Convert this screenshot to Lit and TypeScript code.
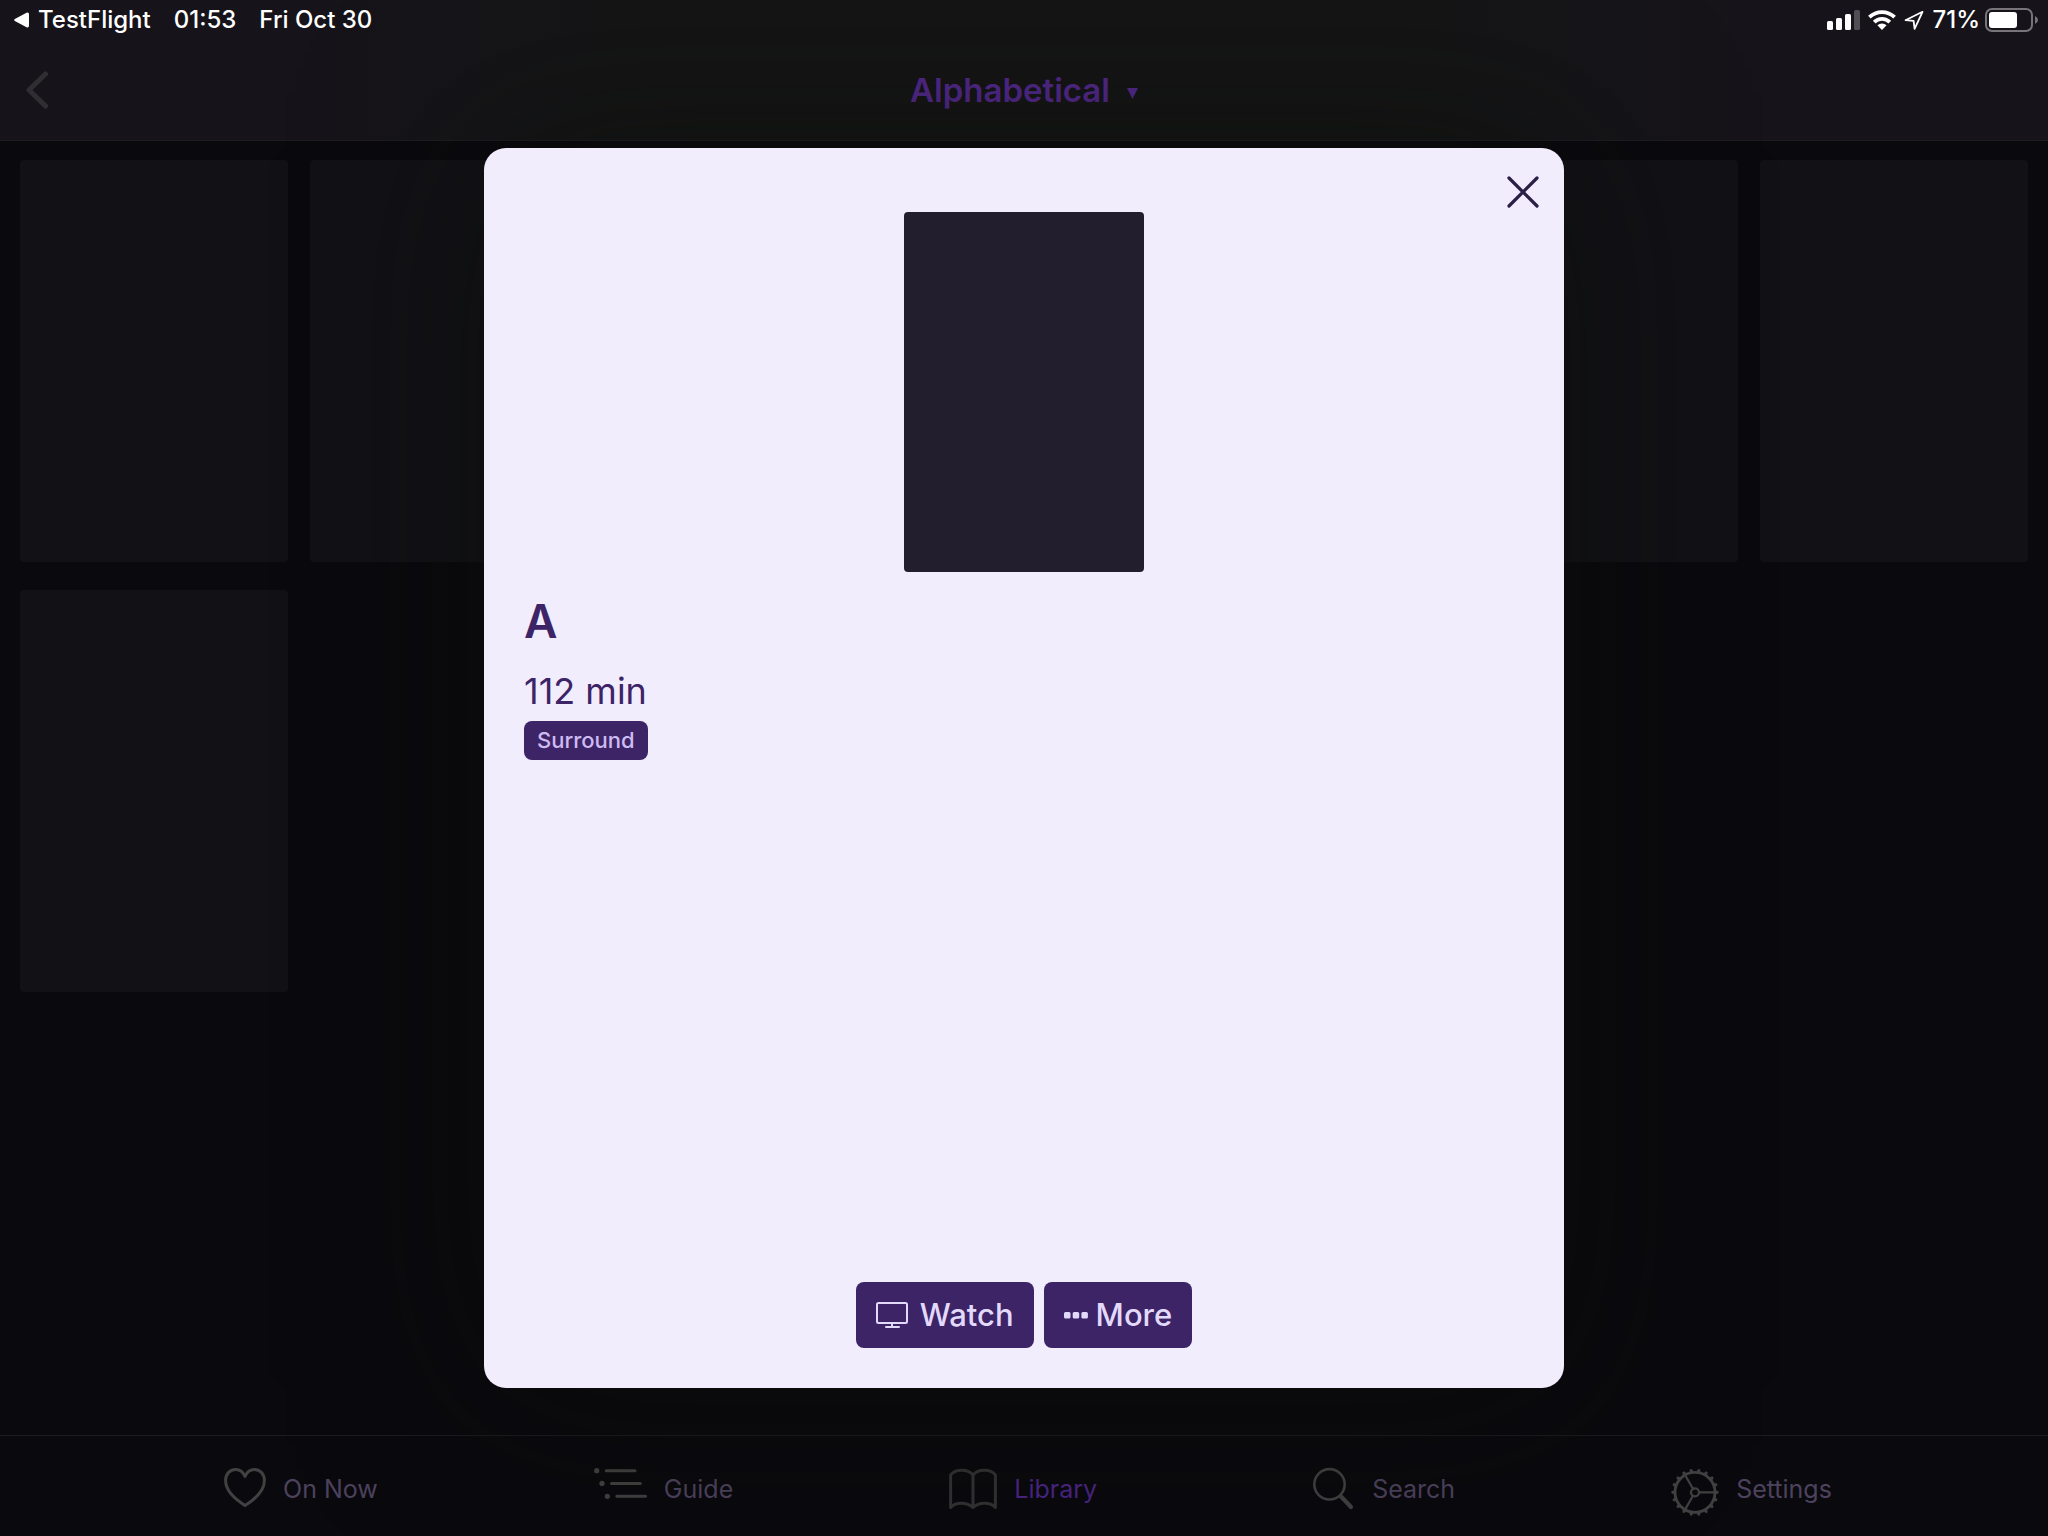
import { LitElement, html, css, svg } from "lit";
import { customElement, state } from "lit/decorators.js";
import { classMap } from "lit/directives/class-map.js";

const gearTeeth = Array.from({ length: 18 }, (_, i) => i * 20);

const icons = {
  heart: html`<svg class="icon" width="42" height="56" viewBox="0 0 42 56" aria-hidden="true">
    <path stroke-width="3" d="M21 45.5C17 43 1.6 33 1.6 20.6C1.6 13.6 6.2 9.4 11.6 9.4C16 9.4 19.4 12.4 21 16.4C22.6 12.4 26 9.4 30.4 9.4C35.8 9.4 40.4 13.6 40.4 20.6C40.4 33 25 43 21 45.5Z"/>
  </svg>`,
  guide: html`<svg class="icon" width="53" height="56" viewBox="0 0 53 56" aria-hidden="true">
    <g class="solid"><circle cx="2.7" cy="10.7" r="2.6"/><circle cx="8" cy="23.4" r="2.6"/><circle cx="13.3" cy="36.3" r="2.6"/></g>
    <path stroke-width="3" d="M12.2 10.7H41M17.5 23.4H46.3M22.8 36.3H51.5"/>
  </svg>`,
  book: html`<svg class="icon dim" width="48" height="56" viewBox="0 0 48 56" aria-hidden="true">
    <path stroke-width="3" d="M1.6 47.5V15C6.5 9 18.5 8.5 24 15C29.5 8.5 41.5 9 46.4 15V47.5C42 42 30 41.5 24 47.5C18 41.5 6 42 1.6 47.5ZM24 14V47.5"/>
  </svg>`,
  search: html`<svg class="icon" width="42" height="56" viewBox="0 0 42 56" aria-hidden="true">
    <circle cx="16.5" cy="24.3" r="15.2" stroke-width="2.6"/>
    <path stroke-width="4.2" d="M28 36.5L38 47"/>
  </svg>`,
  gear: html`<svg class="icon" width="48" height="56" viewBox="0 0 48 56" aria-hidden="true">
    <circle cx="24" cy="32.3" r="20" stroke-width="2.8"/>
    <circle cx="24" cy="32.3" r="4" stroke-width="2.2"/>
    <path stroke-width="2.2" d="M28 32.3H44M22 28.8L14 15M22 35.8L14 49.6"/>
    <g class="solid">${gearTeeth.map(
      (a) => svg`<path d="M44.4 30.2L47.6 31.3V33.3L44.4 34.4Z" transform="rotate(${a} 24 32.3)"/>`
    )}</g>
  </svg>`,
};

const tabs = [
  { id: "on-now", label: "On Now", icon: icons.heart },
  { id: "guide", label: "Guide", icon: icons.guide },
  { id: "library", label: "Library", icon: icons.book },
  { id: "search", label: "Search", icon: icons.search },
  { id: "settings", label: "Settings", icon: icons.gear },
];

@customElement("status-bar")
export class StatusBar extends LitElement {
  static styles = css`
    :host {
      display: flex;
      justify-content: space-between;
      align-items: center;
      height: 40px;
      padding: 0 10px 0 14px;
      color: #fff;
      font: 500 24px/40px Inter, "Liberation Sans", sans-serif;
    }
    .side {
      display: flex;
      align-items: center;
      gap: 23px;
    }
    .right {
      gap: 8px;
    }
    .back {
      display: flex;
      align-items: center;
      gap: 9px;
      color: inherit;
      text-decoration: none;
    }
    .power {
      display: flex;
      align-items: center;
      gap: 5px;
    }
    svg {
      display: block;
    }
  `;

  render() {
    return html`
      <div class="side">
        <a class="back" href="#testflight">
          <svg width="15" height="16" viewBox="0 0 15 16" fill="#fff" aria-hidden="true">
            <path d="M0.8 7Q-0.4 8 0.8 9L12.5 15.2Q15 16 15 13.8V2.2Q15 0 12.5 0.8Z"/>
          </svg>
          <span>TestFlight</span>
        </a>
        <span>01:53</span>
        <span>Fri Oct 30</span>
      </div>
      <div class="side right">
        <svg width="33" height="20" viewBox="0 0 33 20" fill="#fff" aria-hidden="true">
          <rect x="0" y="11" width="6" height="9" rx="1.5"/>
          <rect x="9" y="8" width="6" height="12" rx="1.5"/>
          <rect x="18" y="4" width="6" height="16" rx="1.5"/>
          <rect x="27" y="0" width="6" height="20" rx="1.5" opacity="0.25"/>
        </svg>
        <svg width="28" height="20" viewBox="0 0 28 20" aria-hidden="true">
          <g fill="none" stroke="#fff" stroke-width="3.8">
            <path d="M1.4 7.2A18 18 0 0 1 26.6 7.2"/>
            <path d="M6.2 12.1A11 11 0 0 1 21.8 12.1"/>
          </g>
          <path fill="#fff" d="M9.4 15.3A6.5 6.5 0 0 1 18.6 15.3L14 20Z"/>
        </svg>
        <svg width="20" height="20" viewBox="0 0 20 20" fill="none" stroke="#fff" stroke-width="1.8" stroke-linejoin="round" aria-hidden="true">
          <path d="M18.5 1.8L1.5 10.2L9.6 10.8L10.6 18.8Z"/>
        </svg>
        <div class="power">
          <span>71%</span>
          <svg width="53" height="24" viewBox="0 0 53 24" aria-hidden="true">
            <rect x="1" y="1" width="46" height="22" rx="6" fill="none" stroke="#77757a" stroke-width="2"/>
            <rect x="4" y="4" width="28" height="16" rx="3" fill="#fff"/>
            <path d="M50 8Q53 9.5 53 12T50 16Z" fill="#77757a"/>
          </svg>
        </div>
      </div>
    `;
  }
}

@customElement("tab-bar")
export class TabBar extends LitElement {
  static styles = css`
    :host {
      display: block;
      border-top: 1px solid #1c1b1d;
    }
    .bar {
      display: flex;
      justify-content: space-evenly;
      align-items: center;
      height: 94px;
      padding: 6px 0 0 8px;
    }
    .tab {
      display: flex;
      align-items: center;
      gap: 17px;
      color: #4c425d;
      font: 400 25px/32px Inter, "Liberation Sans", sans-serif;
      text-decoration: none;
    }
    .active {
      color: #4a2584;
    }
    .icon {
      display: block;
      margin-bottom: 2px;
      fill: none;
      stroke: #424141;
      stroke-linecap: round;
      stroke-linejoin: round;
    }
    .icon .solid {
      fill: #424141;
      stroke: none;
    }
    .dim {
      stroke: #323233;
    }
  `;

  @state() private current = "library";

  render() {
    return html`<nav class="bar">
      ${tabs.map(
        (t) => html`<a
          class=${classMap({ tab: true, active: t.id === this.current })}
          href="#${t.id}"
          aria-current=${t.id === this.current ? "page" : "false"}
          @click=${() => (this.current = t.id)}
          >${t.icon}<span>${t.label}</span></a
        >`
      )}
    </nav>`;
  }
}

@customElement("detail-sheet")
export class DetailSheet extends LitElement {
  static styles = css`
    :host {
      position: relative;
      box-sizing: border-box;
      display: flex;
      flex-direction: column;
      padding: 64px 40px 40px;
      border-radius: 22px;
      background: #f1edfc;
      color: #3c2467;
      font-family: Inter, "Liberation Sans", sans-serif;
      box-shadow: 0 0 180px rgba(12, 14, 8, 0.6);
    }
    .close {
      position: absolute;
      top: 22px;
      right: 19px;
      padding: 6px;
      border: 0;
      background: none;
      cursor: pointer;
    }
    svg {
      display: block;
    }
    .poster {
      align-self: center;
      width: 240px;
      aspect-ratio: 2 / 3;
      border-radius: 4px;
      background: #231e2d;
    }
    h1 {
      margin: 19px 0 0;
      font-size: 46px;
      font-weight: 600;
      line-height: 60px;
    }
    .length {
      margin: 16px 0 0;
      font-size: 36px;
      font-weight: 400;
      line-height: 48px;
    }
    .badge {
      align-self: flex-start;
      margin-top: 6px;
      padding: 0 13px;
      border-radius: 8px;
      background: #3c2467;
      color: #cdbbf2;
      font-size: 22px;
      font-weight: 500;
      line-height: 39px;
    }
    .actions {
      display: flex;
      justify-content: center;
      gap: 10px;
      margin-top: auto;
    }
    .action {
      display: flex;
      align-items: center;
      gap: 12px;
      height: 66px;
      padding: 0 20px;
      border: 0;
      border-radius: 8px;
      background: #3c2467;
      color: #e3d9fb;
      font: 500 31px/40px Inter, "Liberation Sans", sans-serif;
      cursor: pointer;
    }
    .more {
      gap: 8px;
    }
  `;

  render() {
    return html`
      <button class="close" aria-label="Close">
        <svg width="32" height="32" viewBox="0 0 32 32" fill="none" stroke="#2a2046" stroke-width="3.2" stroke-linecap="round">
          <path d="M2 2L30 30M30 2L2 30"/>
        </svg>
      </button>
      <div class="poster"></div>
      <h1>A</h1>
      <p class="length">112 min</p>
      <span class="badge">Surround</span>
      <div class="actions">
        <button class="action">
          <svg width="32" height="26" viewBox="0 0 32 26" fill="none" stroke="#e3d9fb" stroke-width="2" stroke-linecap="round" aria-hidden="true">
            <rect x="1" y="1" width="30" height="20" rx="1.5"/>
            <path d="M16 21V24M10 25H23"/>
          </svg>
          <span>Watch</span>
        </button>
        <button class="action more">
          <svg width="24" height="8" viewBox="0 0 24 8" fill="#e3d9fb" aria-hidden="true">
            <rect x="0" y="1" width="6.5" height="6.5" rx="1.5"/>
            <rect x="8.7" y="1" width="6.5" height="6.5" rx="1.5"/>
            <rect x="17.4" y="1" width="6.5" height="6.5" rx="1.5"/>
          </svg>
          <span>More</span>
        </button>
      </div>
    `;
  }
}

@customElement("app-root")
export class AppRoot extends LitElement {
  static styles = css`
    :host {
      position: relative;
      display: flex;
      flex-direction: column;
      min-height: 100vh;
      background: #0a090e;
      font-family: Inter, "Liberation Sans", sans-serif;
    }
    .top {
      border-bottom: 1px solid #1e1c21;
      background: linear-gradient(90deg, #16141a 15%, #151516 30%, #151516 70%, #16141a 85%);
    }
    .navbar {
      display: grid;
      grid-template-columns: 1fr auto 1fr;
      align-items: center;
      height: 100px;
      padding: 0 20px;
    }
    .back {
      justify-self: start;
      padding: 6px;
      border: 0;
      background: none;
    }
    svg {
      display: block;
    }
    .sort {
      display: flex;
      align-items: center;
      gap: 17px;
    }
    .order {
      field-sizing: content;
      appearance: none;
      padding: 0;
      border: 0;
      background: none;
      color: #54298f;
      font: 600 33px/44px Inter, "Liberation Sans", sans-serif;
    }
    .arrow {
      margin-top: 6px;
      fill: #54298f;
    }
    .library {
      flex: 1;
      display: grid;
      grid-template-columns: repeat(7, 1fr);
      align-content: start;
      gap: 28px 22px;
      margin: 0;
      padding: 19px 20px;
      list-style: none;
    }
    .tile {
      aspect-ratio: 2 / 3;
      border-radius: 4px;
      background: #121116;
    }
    .overlay {
      position: absolute;
      inset: 0;
      display: flex;
      justify-content: center;
      padding: 148px 24px;
      overflow: hidden;
    }
    .sheet {
      width: min(1080px, 100%);
    }
    .status {
      position: relative;
      z-index: 1;
    }
  `;

  render() {
    return html`
      <header class="top">
        <status-bar class="status"></status-bar>
        <div class="navbar">
          <button class="back" aria-label="Back">
            <svg width="22" height="38" viewBox="0 0 22 38" fill="none" stroke="#302e33" stroke-width="5" stroke-linecap="round" stroke-linejoin="round">
              <path d="M19.5 3L3 19L19.5 35"/>
            </svg>
          </button>
          <label class="sort">
            <select class="order" aria-label="Sort order">
              <option>Alphabetical</option>
            </select>
            <svg class="arrow" width="11" height="11" viewBox="0 0 11 11" aria-hidden="true"><path d="M0 0H11L5.5 11Z"/></svg>
          </label>
        </div>
      </header>
      <ul class="library">
        ${Array.from({ length: 8 }, () => html`<li class="tile"></li>`)}
      </ul>
      <tab-bar></tab-bar>
      <div class="overlay">
        <detail-sheet class="sheet" role="dialog" aria-modal="true"></detail-sheet>
      </div>
    `;
  }
}
